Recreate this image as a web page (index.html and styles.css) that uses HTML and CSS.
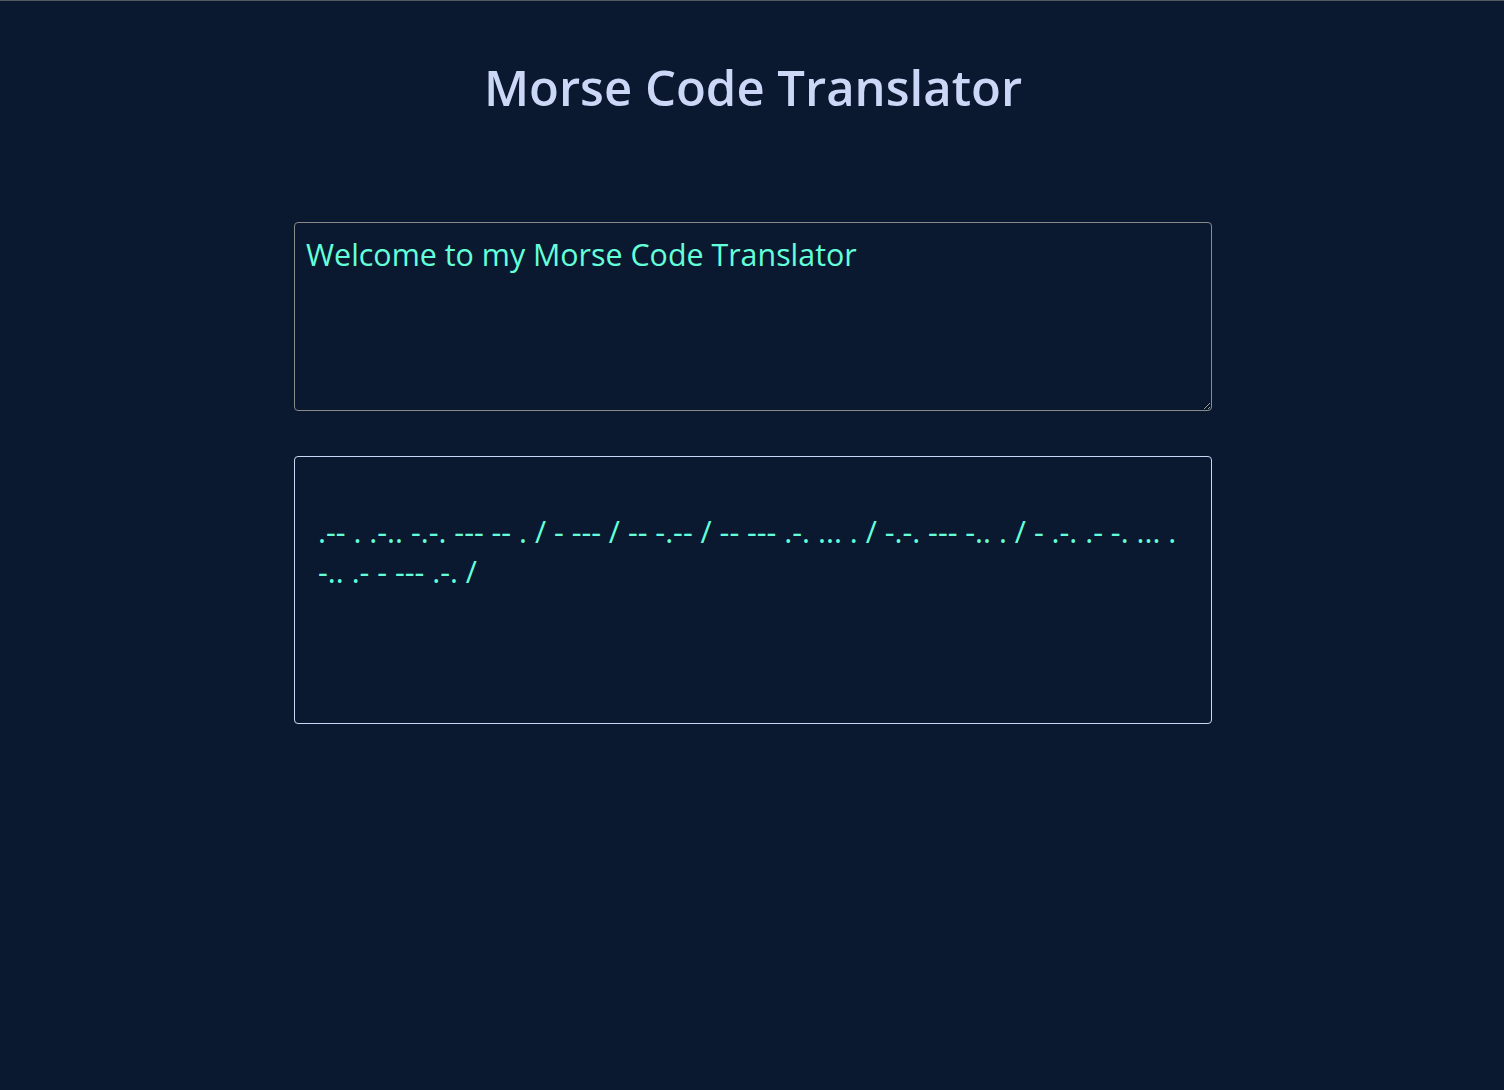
FILE: index.html
```html
<!DOCTYPE html>
<html lang="en">
<head>
<meta charset="utf-8">
<title>Morse Code Translator</title>
<link rel="stylesheet" href="styles.css">
</head>
<body>
<main class="app">
  <h1 class="title">Morse Code Translator</h1>
  <textarea class="input">Welcome to my Morse Code Translator</textarea>
  <div class="output">
    <p class="output-text">.-- . .-.. -.-. --- -- . / - --- / -- -.-- / -- --- .-. ... . / -.-. --- -.. . / - .-. .- -. ... .-.. .- - --- .-. /</p>
  </div>
</main>
</body>
</html>
```
FILE: styles.css
```css
html, body {
  margin: 0;
  padding: 0;
}
body {
  background: #0a192f;
  border-top: 1px solid #555a60;
  padding-left: 2px;
  min-height: 1089px;
  font-family: "Open Sans", "Noto Sans", sans-serif;
}
.app {
  width: 918px;
  margin: 0 auto;
  display: flex;
  flex-direction: column;
}
.title {
  margin: 50px 0 0;
  text-align: center;
  color: #ccd6f6;
  font-size: 49px;
  font-weight: 600;
  line-height: 72px;
}
.input {
  margin-top: 99px;
  box-sizing: border-box;
  width: 918px;
  height: 189px;
  background: #0a192f;
  color: #64ffda;
  border: 1px solid #8a8a8a;
  border-radius: 4px;
  padding: 13px 11px;
  font-family: "Open Sans", "Noto Sans", sans-serif;
  font-size: 30.4px;
  line-height: 1.25;
  resize: vertical;
  outline: none;
}
.output {
  margin-top: 45px;
  box-sizing: border-box;
  height: 268px;
  border: 1px solid #ccd6f6;
  border-radius: 4px;
  padding: 27px 23px 25px;
}
.output-text {
  margin: 28px 0 0;
  color: #64ffda;
  font-size: 30.4px;
  line-height: 40px;
  word-break: break-all;
}
```
